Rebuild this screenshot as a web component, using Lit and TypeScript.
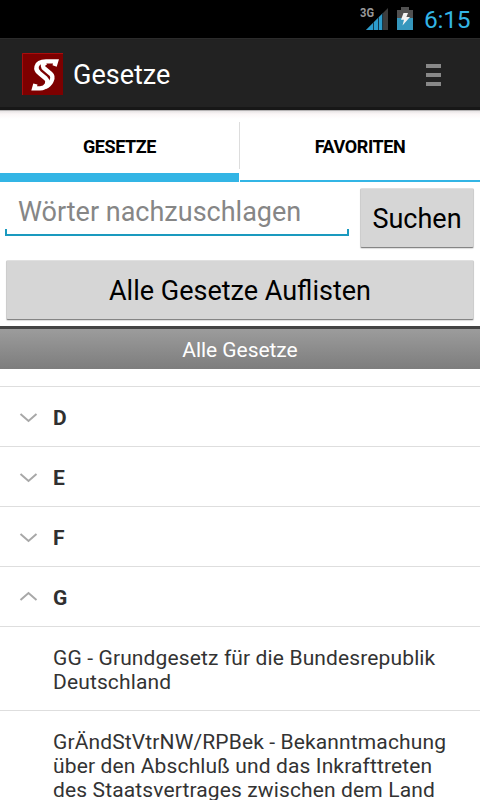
import { LitElement, html, css } from "lit";
import { customElement } from "lit/decorators.js";

interface Group {
  letter: string;
  open: boolean;
}

const groups: Group[] = [
  { letter: "D", open: false },
  { letter: "E", open: false },
  { letter: "F", open: false },
  { letter: "G", open: true },
];

const laws: string[][] = [
  ["GG - Grundgesetz für die Bundesrepublik", "Deutschland"],
  [
    "GrÄndStVtrNW/RPBek - Bekanntmachung",
    "über den Abschluß und das Inkrafttreten",
    "des Staatsvertrages zwischen dem Land",
  ],
];

@customElement("app-root")
export class AppRoot extends LitElement {
  static styles = css`
    :host {
      display: flex;
      flex-direction: column;
      width: 480px;
      height: 800px;
      overflow: hidden;
      background: #fff;
      color: #000;
      font-family: Roboto, sans-serif;
      white-space: nowrap;
    }
    * {
      box-sizing: border-box;
    }
    svg {
      display: block;
      flex: none;
    }
    .status {
      flex: none;
      height: 38px;
      background: #000;
      display: flex;
      justify-content: flex-end;
      padding: 5px 9px 0 0;
    }
    .net {
      font: 700 12.5px Roboto, sans-serif;
    }
    .clock {
      width: 47px;
      margin-left: 10px;
      font-size: 24.5px;
      line-height: 30px;
      color: #33b5e5;
      letter-spacing: -0.2px;
    }
    .bar {
      flex: none;
      height: 72px;
      background: #222;
      border-top: 1px solid #2b2b2b;
      border-bottom: 3px solid #171717;
      display: flex;
      align-items: flex-start;
      padding: 14px 39px 0 22px;
    }
    .title {
      flex: 1;
      margin-left: 10px;
      font-size: 27px;
      line-height: 32px;
      padding-top: 6px;
      color: #fff;
    }
    .menu {
      margin-top: 11px;
      width: 15px;
      display: grid;
      gap: 5px;
    }
    .menu i {
      height: 4px;
      background: #888;
    }
    .tabs {
      flex: none;
      height: 72px;
      display: grid;
      grid-template-columns: 239px 1px 240px;
      background: linear-gradient(#b5b3b4 0 1px, #e6e3e4 1px, #fbf6f7 4px, #fff 9px);
    }
    .tab {
      border-bottom: 2px solid #33b5e5;
      text-align: center;
      font-size: 18px;
      font-weight: 700;
      letter-spacing: -0.4px;
      line-height: 22px;
      padding-top: 26px;
    }
    .tab.on {
      border-bottom-width: 9px;
    }
    .split {
      background: #ddd;
      height: 47px;
      margin-top: 12px;
    }
    .search {
      flex: none;
      height: 78px;
      display: flex;
      align-items: flex-start;
      padding: 6px 6px 0 5px;
    }
    .field {
      width: 344px;
      height: 48px;
      margin-right: 11px;
      padding: 8px 0 0 13px;
      font-size: 27px;
      line-height: 32px;
      color: #868686;
      background:
        linear-gradient(#1a9abf, #1a9abf) left bottom / 2px 7px no-repeat,
        linear-gradient(#1a9abf, #1a9abf) right bottom / 2px 7px no-repeat,
        linear-gradient(#1a9abf, #1a9abf) left bottom / 100% 2px no-repeat;
    }
    .btn {
      flex: none;
      height: 60px;
      background: #d6d6d6;
      border: 1px solid #cdcdcd;
      border-top-color: #e0e0e0;
      border-bottom-color: #858585;
      border-radius: 2px;
      box-shadow: 0 1px 1px #ddd;
      font-size: 27px;
      line-height: 32px;
      padding-top: 14px;
      text-align: center;
    }
    .find {
      width: 114px;
    }
    .all {
      margin: 0 6px 6px;
    }
    .heading {
      flex: none;
      height: 43px;
      border-top: 3px solid #444;
      background: linear-gradient(#9c9c9c, #7d7d7d);
      color: #fff;
      text-align: center;
      font-size: 21px;
      letter-spacing: -0.05px;
      line-height: 24px;
      padding-top: 9px;
    }
    .list {
      margin-top: 17px;
    }
    .group {
      height: 60px;
      border-top: 1px solid #dedede;
      display: flex;
      padding: 19px 0 0 19px;
      font-size: 21px;
      line-height: 24px;
      font-weight: 700;
      color: #303030;
    }
    .group svg {
      margin: 5px 15px 0 0;
    }
    .law {
      border-top: 1px solid #dedede;
      padding: 19px 0 0 53px;
      font-size: 21px;
      letter-spacing: 0.13px;
      line-height: 24px;
      color: #333;
      height: 84px;
    }
  `;

  private statusBar() {
    return html`<div class="status">
      <svg width="54" height="27" viewBox="0 0 54 27">
        <path d="M6 25L28 3V25Z" fill="#3d3d3d" />
        <path d="M6 25L22 9V25Z" fill="#2b9ccc" />
        <path d="M13.5 17V25M18.5 12V25M22.6 8V25" stroke="#12384a" stroke-width="1" />
        <text class="net" x="0" y="12" fill="#999" textLength="14" lengthAdjust="spacingAndGlyphs">3G</text>
        <path d="M41 2H49V5H53V14H37V5H41Z" fill="#515151" />
        <path d="M37 13H53V25H37Z" fill="#3597bd" />
        <path d="M43.5 8H48L46.4 12H50L42.5 20.5L44 14.8H41Z" fill="#f3f3f3" />
      </svg>
      <span class="clock">6:15</span>
    </div>`;
  }

  private logo() {
    return html`<svg width="41" height="42" viewBox="0 0 41 42">
      <rect width="41" height="42" fill="#7d0000" />
      <path d="M.5 42V.5H41" fill="none" stroke="#a90d0d" />
      <g fill="none" stroke="#fff" stroke-width="4.4">
        <path
          d="M32.6 13L34 8.4H24Q16 8.4 14.6 13.5Q13.6 17.3 17.5 20.3L23.8 25.5Q26.5 28 24.8 31.5Q22.8 35.4 18 35.4H12.2L13.4 31"
        />
        <path d="M24 9.5Q19.4 11.8 21.5 14.8L28.6 20.7Q31.8 23.5 29.5 28Q27.5 32.3 23 34" />
      </g>
    </svg>`;
  }

  private chevron(open: boolean) {
    return html`<svg width="19" height="12" viewBox="0 0 19 12">
      <path
        d=${open ? "M1.5 9L9.5 2L17.5 9" : "M1.5 3L9.5 10L17.5 3"}
        fill="none"
        stroke="#a8a8a8"
        stroke-width="2"
      />
    </svg>`;
  }

  render() {
    return html`
      ${this.statusBar()}
      <div class="bar">
        ${this.logo()}
        <span class="title">Gesetze</span>
        <div class="menu"><i></i><i></i><i></i></div>
      </div>
      <div class="tabs">
        <div class="tab on">GESETZE</div>
        <div class="split"></div>
        <div class="tab">FAVORITEN</div>
      </div>
      <div class="search">
        <div class="field">Wörter nachzuschlagen</div>
        <div class="btn find">Suchen</div>
      </div>
      <div class="btn all">Alle Gesetze Auflisten</div>
      <div class="heading">Alle Gesetze</div>
      <div class="list">
        ${groups.map((g) => html`<div class="group">${this.chevron(g.open)}<span>${g.letter}</span></div>`)}
        ${laws.map((l) => html`<div class="law">${l.map((t) => html`<div>${t}</div>`)}</div>`)}
      </div>
    `;
  }
}
